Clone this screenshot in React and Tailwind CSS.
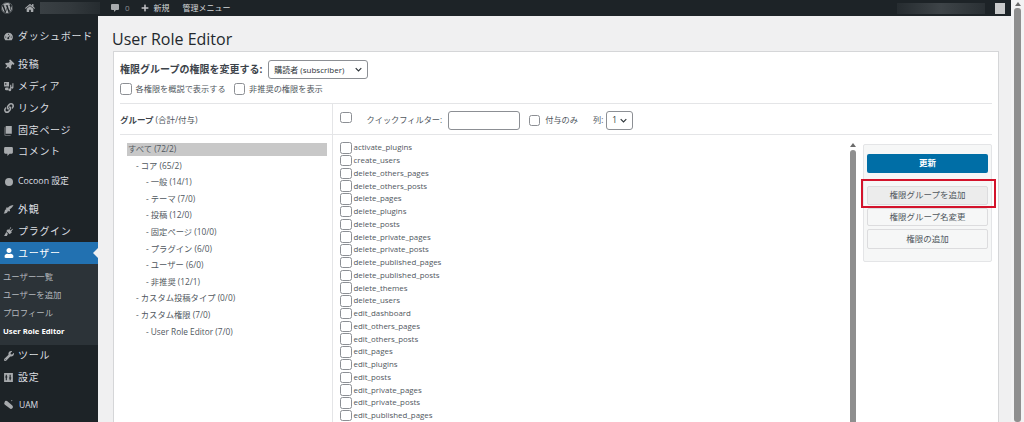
import React from "react";
import { FaWordpress, FaHome, FaPlus, FaThumbtack, FaLink, FaUser, FaWrench } from "react-icons/fa";

const font = { fontFamily: '"Open Sans","Noto Sans CJK JP",sans-serif' };

function Gauge() {
  return (
    <svg viewBox="0 0 20 20" className="w-[11px] h-[11px]" fill="currentColor">
      <path fillRule="evenodd" d="M10 3a8 8 0 0 0-8 8c0 2.200.9 4.200 2.300 5.600h11.400A8 8 0 0 0 18 11a8 8 0 0 0-8-8zm0 2a1 1 0 1 1 0 2 1 1 0 0 1 0-2zM5 10a1 1 0 1 1 0 2 1 1 0 0 1 0-2zm10 0a1 1 0 1 1 0 2 1 1 0 0 1 0-2zm-1.600-3.200-2.500 5.300a1.700 1.700 0 1 1-1.500-.7z" />
    </svg>
  );
}
function Media() {
  return (
    <svg viewBox="0 0 20 20" className="w-[11px] h-[11px]" fill="currentColor">
      <path d="M2 2h9v8H2zm3 2a1.500 1.500 0 1 0 0 3 1.500 1.500 0 0 0 0-3zM13 7h2v9a2.500 2.500 0 1 1-2-2.400zM17 4h2v8a2 2 0 1 1-2-2zM6 12h4v1.500a3 3 0 0 0 .5 3.500H6a2.500 2.500 0 1 1 0-5z" fillRule="evenodd" />
    </svg>
  );
}
function Page() {
  return (
    <svg viewBox="0 0 20 20" className="w-[11px] h-[11px]" fill="currentColor">
      <path d="M5 2h11v14H5zM3 4h1v14h10v1H3z" />
    </svg>
  );
}
function Bubble({ className = "w-[11px] h-[11px]" }) {
  return (
    <svg viewBox="0 0 20 20" className={className} fill="currentColor">
      <path d="M4 2h12a2 2 0 0 1 2 2v8a2 2 0 0 1-2 2h-4l-4 4v-4H4a2 2 0 0 1-2-2V4a2 2 0 0 1 2-2z" />
    </svg>
  );
}
function Circle() {
  return <span className="block w-[8px] h-[8px] rounded-full bg-current" />;
}
function Brush() {
  return (
    <svg viewBox="0 0 20 20" className="w-[11px] h-[11px]" fill="currentColor">
      <path d="M19 2c-3 0-8 2-10 5L7 6 5 8l2 1c-2 0-4 2-4 4 0 2-1 3-2 4 3 1 8 0 8-5l2 2 2-2-1-2c3-2 6-5 7-8z" />
    </svg>
  );
}
function Plug() {
  return (
    <svg viewBox="0 0 20 20" className="w-[11px] h-[11px]" fill="currentColor">
      <path d="M14 2l1 1-3 4 2 1 3-3 1 1-3 4 1 2-4 3-6-6 3-3 2 1zM2 18l4-7 3 3-2 4z" />
    </svg>
  );
}
function Settings() {
  return (
    <svg viewBox="0 0 20 20" className="w-[11px] h-[11px]" fill="currentColor">
      <path d="M2 2h16v16H2zm3 3v3H4v2h1v5h2v-5h1V8H7V5zm7 0v5h-1v2h1v3h2v-3h1v-2h-1V5z" fillRule="evenodd" />
    </svg>
  );
}
function Uam() {
  return (
    <svg viewBox="0 0 20 20" className="w-[12px] h-[12px]" fill="currentColor">
      <path d="M3 5a3 3 0 0 1 5-2l9 8a3.500 3.500 0 0 1-5 5L3 9a3 3 0 0 1 0-4zM16 1a1 1 0 1 1 0 2 1 1 0 0 1 0-2z" />
    </svg>
  );
}

function MenuItem({ icon, label, active, className = "", labelClass = "tracking-[0.7px]" }) {
  return (
    <div className={`relative h-[21.800px] flex items-center pl-[3px] text-[10px] ${active ? "bg-[#2271b1] text-white" : "text-[#dcdfe2]"} ${className}`}>
      <span className={`w-[11px] flex justify-center ${active ? "text-white" : "text-[#a7aaad]"}`}>{icon}</span>
      <span className={`ml-[4px] ${labelClass}`}>{label}</span>
      {active && <span className="absolute right-0 top-[6px] w-0 h-0 border-y-[5px] border-y-transparent border-r-[5px] border-r-[#f0f0f1]" />}
    </div>
  );
}

function Sidebar() {
  return (
    <aside className="w-[98px] shrink-0 bg-[#1d2327] pt-[9px]">
      <MenuItem icon={<Gauge />} label="ダッシュボード" className="mb-[7px] translate-y-[1px]" />
      <MenuItem icon={<FaThumbtack size={10} className="rotate-45" />} label="投稿" />
      <MenuItem icon={<Media />} label="メディア" />
      <MenuItem icon={<FaLink size={10} />} label="リンク" />
      <MenuItem icon={<Page />} label="固定ページ" />
      <MenuItem icon={<Bubble />} label="コメント" className="mb-[8px]" />
      <MenuItem icon={<Circle />} label="Cocoon 設定" className="mb-[6px]" labelClass="text-[8.800px]" />
      <MenuItem icon={<Brush />} label="外観" />
      <MenuItem icon={<Plug />} label="プラグイン" />
      <MenuItem icon={<FaUser size={10} />} label="ユーザー" active />
      <div className="bg-[#2c3338] h-[81px] pt-[4px] pl-[3px] text-[8.400px] text-[#b4b9be] leading-[18px]">
        <div>ユーザー一覧</div>
        <div>ユーザーを追加</div>
        <div>プロフィール</div>
        <div className="font-bold text-white text-[7.700px]">User Role Editor</div>
      </div>
      <MenuItem icon={<FaWrench size={10} />} label="ツール" />
      <MenuItem icon={<Settings />} label="設定" className="mb-[6px]" />
      <MenuItem icon={<Uam />} label="UAM" labelClass="text-[8.500px] ml-[5px]" />
    </aside>
  );
}

function TopBar() {
  return (
    <header className="h-[16px] shrink-0 bg-[#1d2327] flex items-center text-[#d5d7d9] text-[8px]">
      <span className="ml-[1px] text-[#a7aaad]"><FaWordpress size={12} /></span>
      <span className="ml-[12px] text-[#a7aaad]"><FaHome size={10} /></span>
      <span className="ml-[5px] w-[60px] h-[12px] bg-gradient-to-r from-[#3a4044] via-[#33393d] to-[#262c30]" />
      <span className="ml-[10px] text-[#a7aaad]"><Bubble className="w-[10px] h-[10px]" /></span>
      <span className="ml-[5px] text-[#8c8f94]">0</span>
      <span className="ml-[11px] text-[#c3c4c7]"><FaPlus size={8} /></span>
      <span className="ml-[5px]">新規</span>
      <span className="ml-[13px]">管理メニュー</span>
      <span className="ml-auto w-[88px] h-[11px] bg-gradient-to-r from-[#262c30] via-[#3e4448] to-[#2a3034]" />
      <span className="ml-[10px] mr-[6px] w-[10px] h-[11px] bg-[#c9cacb]" />
    </header>
  );
}

function Check({ className = "" }) {
  return <span className={`block w-[11.500px] h-[11.500px] shrink-0 rounded-[2.500px] border border-[#8c8f94] bg-white ${className}`} />;
}

const groups = [
  ["すべて (72/2)", 0],
  ["- コア (65/2)", 1],
  ["- 一般 (14/1)", 2],
  ["- テーマ (7/0)", 2],
  ["- 投稿 (12/0)", 2],
  ["- 固定ページ (10/0)", 2],
  ["- プラグイン (6/0)", 2],
  ["- ユーザー (6/0)", 2],
  ["- 非推奨 (12/1)", 2],
  ["- カスタム投稿タイプ (0/0)", 1],
  ["- カスタム権限 (7/0)", 1],
  ["- User Role Editor (7/0)", 2],
];

const caps = [
  "activate_plugins", "create_users", "delete_others_pages", "delete_others_posts", "delete_pages",
  "delete_plugins", "delete_posts", "delete_private_pages", "delete_private_posts", "delete_published_pages",
  "delete_published_posts", "delete_themes", "delete_users", "edit_dashboard", "edit_others_pages",
  "edit_others_posts", "edit_pages", "edit_plugins", "edit_posts", "edit_private_pages",
  "edit_private_posts", "edit_published_pages",
];

const pads = ["pl-[1px]", "pl-[9px]", "pl-[19px]"];

function Chevron() {
  return (
    <svg viewBox="0 0 10 6" className="w-[7px] h-[5px]" fill="none" stroke="#2c3338" strokeWidth="1.600">
      <path d="M1 1l4 4 4-4" />
    </svg>
  );
}

function SideButton({ children, className = "" }) {
  return (
    <div className={`h-[19px] rounded-[2px] border border-[#dcdcde] bg-[#f6f7f7] flex items-center justify-center text-[8.500px] text-[#50575e] ${className}`}>
      {children}
    </div>
  );
}

function Card() {
  return (
    <section className="ml-[15px] mr-[12px] flex-1 min-h-0 bg-white border border-[#d5d6d8] border-b-0 px-[6px] flex flex-col overflow-hidden text-[#50575e]">
      <div className="h-[25px] mt-[5px] flex items-center shrink-0">
        <span className="text-[10px] font-bold text-[#3c434a]">権限グループの権限を変更する:</span>
        <div className="ml-[6px] w-[100px] h-[19px] border border-[#8c8f94] rounded-[3px] flex items-center justify-between pl-[5px] pr-[5px] text-[8px] text-[#2c3338]">
          <span>購読者 (subscriber)</span>
          <Chevron />
        </div>
      </div>
      <div className="h-[22px] flex items-center text-[8.200px] shrink-0 border-b border-[#e4e5e7] pb-[7px]">
        <Check />
        <span className="ml-[4px]">各権限を概説で表示する</span>
        <Check className="ml-[8px]" />
        <span className="ml-[4px]">非推奨の権限を表示</span>
      </div>
      <div className="flex-1 min-h-0 flex">
        <div className="w-[213px] shrink-0 border-r border-[#e4e5e7]">
          <div className="h-[30px] mt-[1px] border-b border-[#e4e5e7] flex items-center text-[8.500px] pt-[2px]">
            <span className="font-bold text-[#3c434a]">グループ</span>
            <span className="ml-[2px]">(合計/付与)</span>
          </div>
          <div className="pt-[8px] pr-[5px] pl-[7px] text-[8.300px]">
            {groups.map(([t, l], i) => (
              <div key={t} className={`h-[16.600px] ${pads[l]}`}>
                <div className={`h-[12.500px] leading-[12.500px] ${i === 0 ? "bg-[#c8c8c8] -ml-[1px] pl-[1px]" : ""}`}>{t}</div>
              </div>
            ))}
          </div>
        </div>
        <div className="flex-1 min-w-0">
          <div className="h-[30px] mt-[1px] border-b border-[#e4e5e7] flex items-center text-[8.200px] pl-[7px] pt-[2px]">
            <Check className="-mt-[6px]" />
            <span className="ml-[15px]">クイックフィルター:</span>
            <span className="ml-[5.500px] w-[72px] h-[19px] border border-[#8c8f94] rounded-[3px]" />
            <Check className="ml-[9px]" />
            <span className="ml-[5px]">付与のみ</span>
            <span className="ml-[15px]">列:</span>
            <div className="ml-[3px] w-[27px] h-[19px] border border-[#8c8f94] rounded-[3px] flex items-center justify-between px-[5px] text-[#2c3338]">
              <span>1</span>
              <Chevron />
            </div>
          </div>
          <div className="flex pt-[6px] min-h-0">
            <div className="w-[517px] shrink-0 pl-[7px] pt-[1px] text-[7.900px]">
              {caps.map((c) => (
                <div key={c} className="h-[12.750px] flex items-center">
                  <Check className="-mt-[1px]" />
                  <span className="ml-[2px]">{c}</span>
                </div>
              ))}
              <div className="h-[12.750px] flex items-center">
                <Check className="-mt-[1px]" />
              </div>
            </div>
            <div className="w-[6px] shrink-0 flex flex-col items-center">
              <span className="mt-[2px] w-0 h-0 border-x-[3px] border-x-transparent border-b-[4px] border-b-[#6b6b6b]" />
              <span className="mt-[3px] w-[6px] h-[300px] rounded-[3px] bg-[#8f8f8f]" />
            </div>
            <div className="ml-[7px] mt-[3px] w-[129px] h-[118px] shrink-0 rounded-[2px] border border-[#e4e5e7] bg-[#f6f7f7] px-[3px] pt-[9px]">
              <div className="h-[19px] rounded-[2px] bg-[#006ea6] flex items-center justify-center text-[8.500px] text-white font-bold">更新</div>
              <div className="relative mt-[13px]">
                <SideButton className="!bg-[#ececec]">権限グループを追加</SideButton>
                <span className="absolute -left-[6px] -right-[8px] -top-[7px] -bottom-[3px] border-2 border-[#d3132b]" />
              </div>
              <SideButton className="mt-[3px] !h-[18px]">権限グループ名変更</SideButton>
              <SideButton className="mt-[3px] !h-[20px]">権限の追加</SideButton>
            </div>
          </div>
        </div>
      </div>
    </section>
  );
}

export default function App() {
  return (
    <div style={font} className="w-[1024px] h-[422px] overflow-hidden flex bg-[#f0f0f1]">
      <div className="w-[1011px] shrink-0 flex flex-col">
        <TopBar />
        <div className="flex-1 min-h-0 flex">
          <Sidebar />
          <main className="flex-1 min-w-0 flex flex-col">
            <h1 className="ml-[14px] mt-[13px] h-[22px] leading-[20px] text-[16px] text-[#23282d] shrink-0">User Role Editor</h1>
            <Card />
          </main>
        </div>
      </div>
      <div className="w-[13px] shrink-0 bg-[#f3f3f4] flex flex-col items-center">
        <span className="mt-[2px] w-0 h-0 border-x-[3px] border-x-transparent border-b-[4px] border-b-[#6b6b6b]" />
        <span className="mt-[2px] w-[7px] flex-1 rounded-[3px] bg-[#8f8f8f]" />
      </div>
    </div>
  );
}
